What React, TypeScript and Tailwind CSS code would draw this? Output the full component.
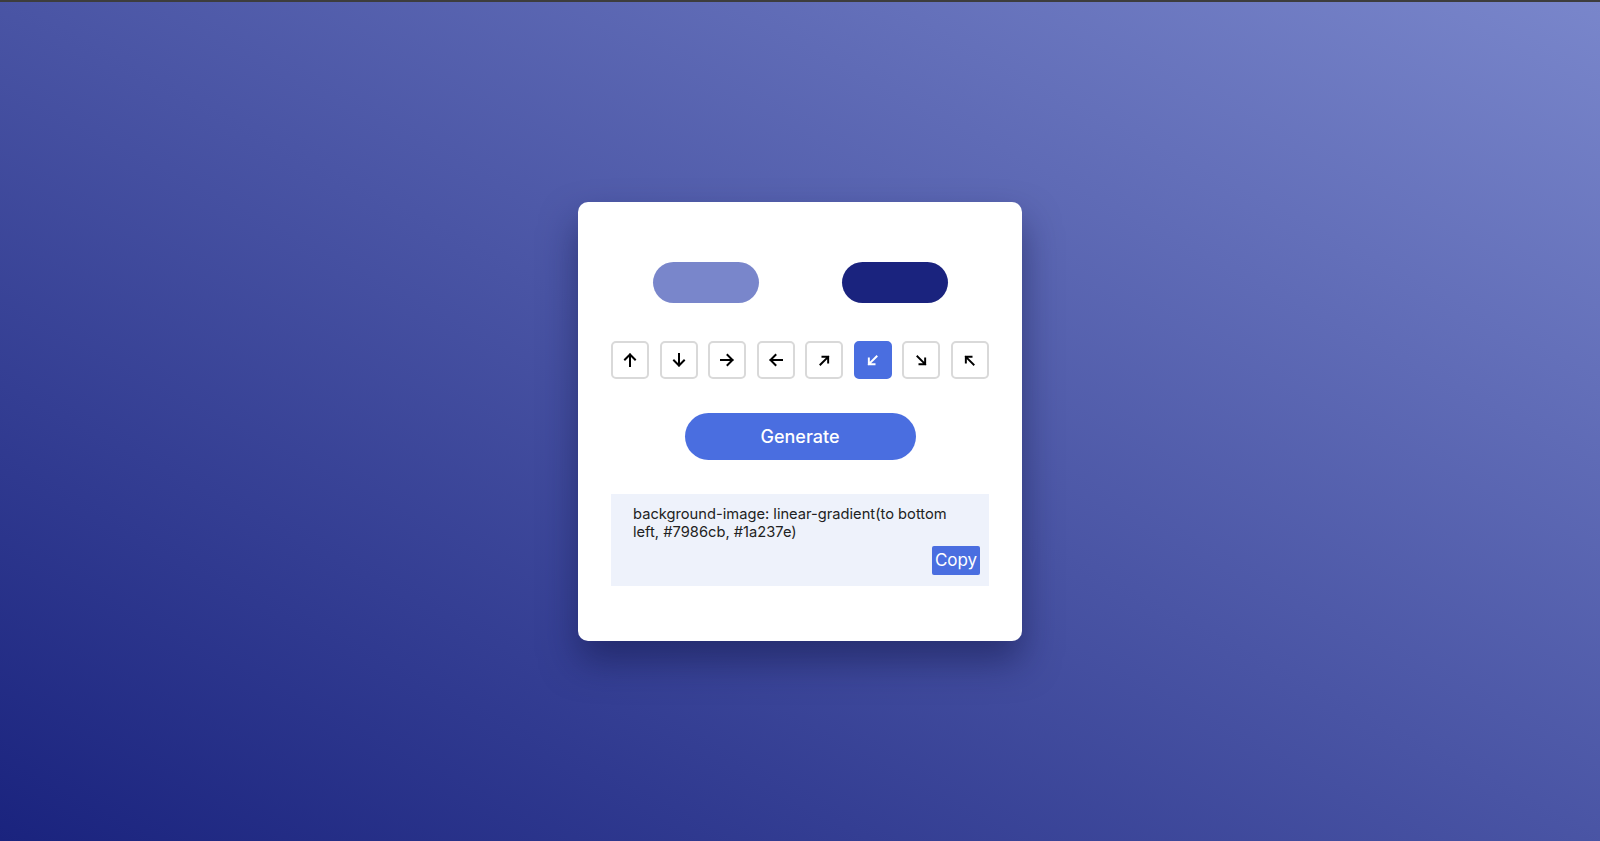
import React, { useState } from "react";

// arrow paths drawn in a 16x16 box
const arrows: { key: string; d: string; size: number }[] = [
  { key: "to top", d: "M8 14V2.5M3 7.5l5-5 5 5", size: 16 },
  { key: "to bottom", d: "M8 2v11.5M3 8.5l5 5 5-5", size: 16 },
  { key: "to right", d: "M2 8h11.5M8.5 3l5 5-5 5", size: 16 },
  { key: "to left", d: "M14 8H2.5M7.5 3l-5 5 5 5", size: 16 },
  { key: "to top right", d: "M3 13L12.5 3.5M5.5 3.5h7v7", size: 13 },
  { key: "to bottom left", d: "M13 3L3.5 12.5M3.5 5.5v7h7", size: 13 },
  { key: "to bottom right", d: "M3 3l9.5 9.5M12.5 5.5v7h-7", size: 13 },
  { key: "to top left", d: "M13 13L3.5 3.5M3.5 10.5v-7h7", size: 13 },
];

export default function App() {
  const [dir, setDir] = useState("to bottom left");
  const c1 = "#7986cb";
  const c2 = "#1a237e";

  return (
    <main
      className="w-full h-[841px] flex items-center justify-center border-t-2 border-[#3d3d3d] bg-[linear-gradient(to_bottom_left,#7986cb,#1a237e)]"
      style={{ fontFamily: "Inter, 'Noto Sans', sans-serif" }}
    >
      <div className="w-[444px] h-[439px] bg-white rounded-[10px] shadow-[0_20px_36px_rgba(15,20,70,0.5)] px-[33px] pt-[60px]">
        {/* Colour pickers */}
        <div className="flex justify-around">
          <div className="w-[106px] h-[41px] rounded-full bg-[#7986cb]"></div>
          <div className="w-[106px] h-[41px] rounded-full bg-[#1a237e]"></div>
        </div>

        {/* Direction buttons */}
        <div className="flex justify-between mt-[38px]">
          {arrows.map((a) => {
            const active = dir === a.key;
            return (
              <button
                key={a.key}
                onClick={() => setDir(a.key)}
                className={`w-[38px] h-[38px] rounded-[5px] flex items-center justify-center ${
                  active ? "bg-[#4a6ee0] border-2 border-[#4a6ee0] text-white" : "bg-white border-2 border-[#d9d9d9] text-black"
                }`}
              >
                <svg width={a.size} height={a.size} viewBox="0 0 16 16" fill="none" stroke="currentColor" strokeWidth={a.size === 16 ? 2 : 2.4} strokeLinecap="square" strokeLinejoin="miter">
                  <path d={a.d} />
                </svg>
              </button>
            );
          })}
        </div>

        {/* Generate */}
        <div className="flex justify-center mt-[34px]">
          <button className="w-[231px] h-[47px] rounded-full bg-[#4a6ee0] text-white text-[18px] font-medium">
            Generate
          </button>
        </div>

        {/* Output */}
        <div className="mt-[34px] h-[92px] bg-[#eef2fb] pl-[22px] pr-[9px] pt-[11px] flex flex-col">
          <p className="text-[14.7px] leading-[18px] text-[#222] pr-[24px]">
            background-image: linear-gradient({dir}, {c1}, {c2})
          </p>
          <div className="flex justify-end mt-auto mb-[11px]">
            <button className="w-[48px] h-[29px] rounded-[2px] bg-[#4a6ee0] text-white text-[17px]">Copy</button>
          </div>
        </div>
      </div>
    </main>
  );
}
